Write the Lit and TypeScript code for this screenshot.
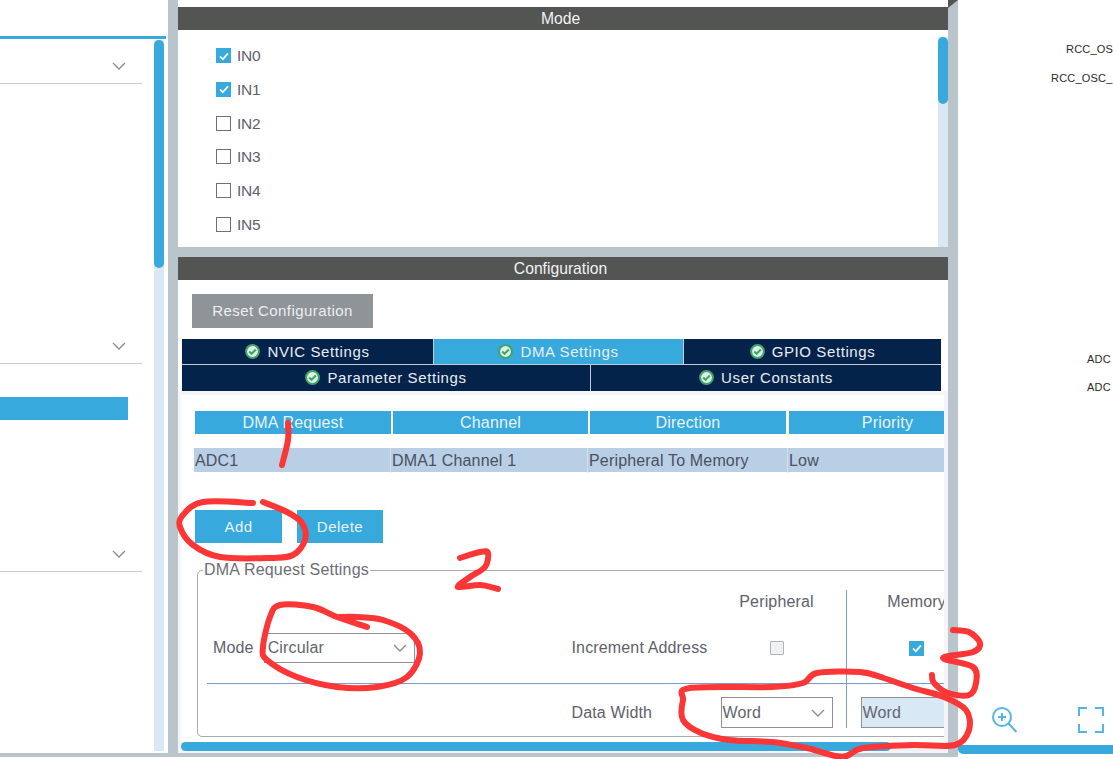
import { LitElement, html, css, svg } from "lit";
import { customElement } from "lit/decorators.js";

type Pt = [number, number];

function smooth(pts: Pt[]): string {
  let d = `M${pts[0][0]} ${pts[0][1]}`;
  for (let i = 0; i < pts.length - 1; i++) {
    const p0 = pts[Math.max(i - 1, 0)];
    const p1 = pts[i];
    const p2 = pts[i + 1];
    const p3 = pts[Math.min(i + 2, pts.length - 1)];
    const c1x = p1[0] + (p2[0] - p0[0]) / 6;
    const c1y = p1[1] + (p2[1] - p0[1]) / 6;
    const c2x = p2[0] - (p3[0] - p1[0]) / 6;
    const c2y = p2[1] - (p3[1] - p1[1]) / 6;
    d += ` C${c1x.toFixed(1)} ${c1y.toFixed(1)} ${c2x.toFixed(1)} ${c2y.toFixed(1)} ${p2[0]} ${p2[1]}`;
  }
  return d;
}

const marks: Pt[][] = [
  [[288, 423], [288, 440], [282, 465]],
  [[253, 503], [203, 502], [183, 515], [180, 527], [193, 545], [220, 557], [270, 558], [293, 555], [305, 540], [302, 523], [287, 512], [263, 502]],
  [[460, 558], [480, 552], [488, 553], [485, 567], [470, 577], [458, 587], [480, 585], [498, 589]],
  [[367, 627], [337, 617], [313, 607], [280, 605], [270, 617], [263, 647], [267, 660], [297, 677], [337, 687], [377, 687], [407, 677], [420, 653], [410, 633], [383, 620], [357, 617], [337, 617]],
  [[953, 630], [969, 632], [980, 643], [973, 652], [943, 658], [973, 667], [976, 683], [969, 695], [948, 693], [934, 683], [932, 675]],
  [[881, 677], [860, 672], [817, 673], [803, 683], [772, 687], [690, 688], [683, 700], [683, 720], [701, 733], [729, 740], [772, 742], [807, 748], [842, 757], [863, 748], [913, 745], [955, 745], [969, 730], [966, 710], [944, 697], [913, 688], [881, 677]],
];

const chevron = html`<svg class="chev" width="14" height="8" viewBox="0 0 14 8"><path d="M1 1l6 6 6-6" fill="none" stroke="#8c8f92" stroke-width="1.4"/></svg>`;
const okIcon = html`<svg class="ok" width="15" height="15" viewBox="0 0 15 15"><circle cx="7.5" cy="7.5" r="7.4" fill="#3fa66a"/><circle cx="7.5" cy="7.5" r="5.4" fill="#dff0e6"/><path d="M4.2 7.4l2.4 2.4 4.2-4.2" fill="none" stroke="#3fa66a" stroke-width="2.1"/></svg>`;
const tick = html`<svg width="14" height="14" viewBox="0 0 14 14"><path d="M3 7.4l2.8 2.8L11 4.4" fill="none" stroke="#fff" stroke-width="1.7"/></svg>`;

@customElement("app-root")
export class AppRoot extends LitElement {
  static styles = css`
    :host {
      display: block;
      position: relative;
      width: 1113px;
      height: 759px;
      overflow: hidden;
      background: #fff;
      font-family: "Liberation Sans", Arial, sans-serif;
      font-size: 16px;
      color: #5e616b;
    }
    .frame { display: grid; grid-template-columns: 168px 10px 770px 10px 155px; grid-template-rows: 757px; }
    .gutter { background: #b9c4cb; position: relative; }
    .corner { position: absolute; top: 0; left: 0; width: 0; height: 0; border-top: 8px solid #535553; border-right: 10px solid transparent; }

    .left { display: flex; flex-direction: column; box-sizing: border-box; padding-top: 36px; height: 757px; border-bottom: 4px solid #b9c4cb; }
    .left-top { height: 3px; background: #38a9dc; margin-right: 2px; flex: none; }
    .left-body { flex: 1; display: flex; padding-top: 1px; min-height: 0; padding-bottom: 2px; }
    .tree { width: 142px; flex: none; }
    .section { height: 21px; padding-top: 2px; border-bottom: 1px solid #c9ced2; display: flex; justify-content: flex-end; align-items: flex-start; padding-right: 16px; }
    .s1 { margin-top: 20px; }
    .s2 { margin-top: 256px; }
    .s3 { margin-top: 128px; }
    .sel { width: 128px; height: 23px; background: #38a9dc; margin-top: 33px; }
    .vbar { width: 10px; margin-left: 12px; background: #d9e8f5; flex: none; }
    .vthumb { background: #38a9dc; border-radius: 5px; }
    .thumb-left { height: 228px; }

    .center { display: flex; flex-direction: column; background: #b9c4cb; padding-bottom: 4px; min-height: 0; }
    .head { height: 23px; background: #535553; color: #f2f2f2; text-align: center; line-height: 24px; font-size: 15.7px; flex: none; padding-right: 5px; }
    .mode-wrap { background: #fff; padding-top: 7px; height: 240px; box-sizing: content-box; display: flex; flex-direction: column; flex: none; }
    .mode-body { flex: 1; display: flex; min-height: 0; padding-top: 7px; }
    .inputs { flex: 1; padding: 11px 0 0 38px; display: flex; flex-direction: column; }
    .in { height: 33.8px; flex: none; display: flex; align-items: flex-start; gap: 6px; line-height: 16px; font-size: 15.5px; letter-spacing: -.2px; }
    .cb { width: 15px; height: 15px; box-sizing: border-box; border: 1.5px solid #707070; background: #fff; flex: none; display: flex; }
    .cb.on { background: #38a9dc; border: 0; align-items: center; justify-content: center; }
    .cb.off { width: 14px; height: 14px; border: 1px solid #b0b3b6; background: #eff0f1; border-radius: 1px; }
    .mode-bar { width: 10px; background: #d9e8f5; flex: none; }
    .mode-bar .vthumb { height: 67px; }

    .config { margin-top: 10px; flex: 1; background: #fff; display: flex; flex-direction: column; min-height: 0; }
    .reset { align-self: flex-start; margin: 14px 0 0 14px; width: 181px; height: 34px; line-height: 34px; text-align: center; background: #8f9499; color: #eceeef; letter-spacing: .42px; font-size: 15px; }
    .tabs { margin: 11px 7px 0 4px; background: #c5cbd0; display: flex; flex-direction: column; gap: 1px; flex: none; }
    .tabrow { display: flex; gap: 1px; }
    .tab { height: 25px; background: #03234b; color: #e9edf2; display: flex; align-items: center; justify-content: center; gap: 7px; letter-spacing: .6px; font-size: 15px; box-sizing: border-box; }
    .tab.active { background: #38a9dc; }
    .tab.tall { height: 26px; padding-bottom: 2px; }
    .t-nvic { width: 251px; }
    .t-dma { width: 249px; }
    .t-param { width: 408px; }
    .t-flex { flex: 1; }
    .content { flex: 1; min-height: 0; display: flex; flex-direction: column; background: #f3f5f7; padding: 4px 0 0 3px; }
    .pane { flex: 1; min-height: 0; overflow: hidden; padding: 16px 0 0 13px; margin-right: 4px; background: #fff; }
    .table { display: grid; grid-template-columns: 196px 195px 196px 198px; column-gap: 2px; margin-left: 1px; width: 795px; }
    .th { height: 23px; line-height: 23px; background: #38a9dc; color: #e6f3fa; text-align: center; font-size: 16px; letter-spacing: .2px; white-space: nowrap; }
    .th.last { margin-left: 1px; }
    .rows { display: grid; grid-template-columns: 197px 197px 200px 170px; margin-top: 14px; height: 24px; background: #b8cfe6; width: 764px; }
    .td { line-height: 25px; padding-left: 1px; font-size: 16px; letter-spacing: .17px; color: #4d505c; border-right: 1px solid #d2dfee; white-space: nowrap; }
    .btns { display: flex; gap: 15px; margin: 38px 0 0 1px; }
    .btn { width: 87px; height: 33px; line-height: 33px; background: #38a9dc; color: #e6f3fa; text-align: center; letter-spacing: .5px; font-size: 15px; }
    .btn.del { width: 86px; }

    fieldset { margin: 19px 0 0 3px; padding: 0; width: 800px; height: 175px; box-sizing: border-box; border: 1.5px solid #a8acaf; border-radius: 5px; min-inline-size: 0; }
    legend { padding: 0 1px; margin-left: 5px; font-size: 16px; line-height: 16px; letter-spacing: .2px; color: #6b6e76; }
    .fs-grid { display: grid; grid-template-columns: 373.5px 149px 112px 13px 1px 14px 112px; grid-template-rows: 47px 46px 12px 1px 13px 31px; }
    .cell { display: flex; align-items: center; font-size: 16px; letter-spacing: .15px; white-space: nowrap; }
    .center-x { justify-content: center; }
    .mode-cell { padding-left: 15px; gap: 10px; }
    .select { box-sizing: border-box; border: 1px solid #8e9194; height: 30px; display: flex; align-items: center; justify-content: space-between; padding: 0 7px 0 3px; color: #62656d; background: #fff; flex: none; font-size: 16px; }
    .select.mode { width: 151px; }
    .select.word { width: 112px; height: 31px; padding-left: 1px; }
    .select.mem { width: 112px; height: 31px; padding-left: 1px; background: #d8e8f5; }
    .hline { grid-column: 1 / -1; grid-row: 4; margin-left: 8.5px; background: #7f9bcb; }
    .vline { grid-column: 5; grid-row: 1 / -1; margin-top: 12px; background: #7f9bcb; }

    .hbar { height: 9px; margin: 0 4px 2px 0; background: #eef1f4; flex: none; }
    .hthumb { width: 710px; height: 9px; background: #38a9dc; border-radius: 5px; }

    .right { position: relative; display: flex; flex-direction: column; justify-content: flex-end; overflow: hidden; }
    .pin { font-size: 11px; letter-spacing: .2px; color: #2b2b2b; white-space: nowrap; line-height: 13px; position: absolute; }
    .tools { display: flex; justify-content: space-between; padding: 0 9px 11px 33px; }
    .rbar { height: 9px; margin-bottom: 3px; background: #38a9dc; border-radius: 0 0 0 5px; flex: none; }
    .ink { position: absolute; inset: 0; width: 1113px; height: 759px; pointer-events: none; }
  `;

  render() {
    const inputs = ["IN0", "IN1", "IN2", "IN3", "IN4", "IN5"];
    const pins = [
      { t: "RCC_OS", x: 108, y: 43 },
      { t: "RCC_OSC_", x: 93, y: 72 },
      { t: "ADC", x: 129, y: 353 },
      { t: "ADC", x: 129, y: 381 },
    ];
    return html`
      <div class="frame">
        <aside class="left">
          <div class="left-top"></div>
          <div class="left-body">
            <div class="tree">
              <div class="section s1">${chevron}</div>
              <div class="section s2">${chevron}</div>
              <div class="sel"></div>
              <div class="section s3">${chevron}</div>
            </div>
            <div class="vbar"><div class="vthumb thumb-left"></div></div>
          </div>
        </aside>
        <div class="gutter"></div>
        <main class="center">
          <section class="mode-wrap">
            <div class="head">Mode</div>
            <div class="mode-body">
              <div class="inputs">
                ${inputs.map(
                  (n, i) => html`<div class="in"><span class="cb ${i < 2 ? "on" : ""}">${i < 2 ? tick : ""}</span>${n}</div>`
                )}
              </div>
              <div class="mode-bar"><div class="vthumb"></div></div>
            </div>
          </section>
          <section class="config">
            <div class="head">Configuration</div>
            <div class="reset">Reset Configuration</div>
            <div class="tabs">
              <div class="tabrow">
                <div class="tab t-nvic">${okIcon}NVIC Settings</div>
                <div class="tab active t-dma">${okIcon}DMA Settings</div>
                <div class="tab t-flex">${okIcon}GPIO Settings</div>
              </div>
              <div class="tabrow">
                <div class="tab tall t-param">${okIcon}Parameter Settings</div>
                <div class="tab tall t-flex">${okIcon}User Constants</div>
              </div>
            </div>
            <div class="content">
              <div class="pane">
                <div class="table">
                  <div class="th">DMA Request</div>
                  <div class="th">Channel</div>
                  <div class="th">Direction</div>
                  <div class="th last">Priority</div>
                </div>
                <div class="rows">
                  <div class="td">ADC1</div>
                  <div class="td">DMA1 Channel 1</div>
                  <div class="td">Peripheral To Memory</div>
                  <div class="td">Low</div>
                </div>
                <div class="btns">
                  <div class="btn">Add</div>
                  <div class="btn del">Delete</div>
                </div>
                <fieldset>
                  <legend>DMA Request Settings</legend>
                  <div class="fs-grid">
                    <div class="cell center-x" style="grid-column:3;grid-row:1">Peripheral</div>
                    <div class="cell center-x" style="grid-column:7;grid-row:1">Memory</div>
                    <div class="cell mode-cell" style="grid-column:1;grid-row:2">Mode<span class="select mode">Circular ${chevron}</span></div>
                    <div class="cell" style="grid-column:2;grid-row:2">Increment Address</div>
                    <div class="cell center-x" style="grid-column:3;grid-row:2"><span class="cb off"></span></div>
                    <div class="cell center-x" style="grid-column:7;grid-row:2"><span class="cb on">${tick}</span></div>
                    <div class="hline"></div>
                    <div class="vline"></div>
                    <div class="cell" style="grid-column:2;grid-row:6">Data Width</div>
                    <div class="cell" style="grid-column:3;grid-row:6"><span class="select word">Word ${chevron}</span></div>
                    <div class="cell" style="grid-column:7;grid-row:6"><span class="select mem">Word</span></div>
                  </div>
                </fieldset>
              </div>
              <div class="hbar"><div class="hthumb"></div></div>
            </div>
          </section>
        </main>
        <div class="gutter"><div class="corner"></div></div>
        <div class="right">
          ${pins.map((p) => html`<span class="pin" style="left:${p.x}px;top:${p.y}px">${p.t}</span>`)}
          <div class="tools">
            <svg width="27" height="27" viewBox="0 0 27 27" fill="none" stroke="#55b5e2" stroke-width="2">
              <circle cx="11" cy="10" r="9"/>
              <path d="M17.5 16.5l8 8.5M7 10h8M11 6v8"/>
            </svg>
            <svg width="26" height="26" viewBox="0 0 26 26" fill="none" stroke="#55b5e2" stroke-width="2">
              <path d="M1 9V1h8M17 1h8v8M25 17v8h-8M9 25H1v-8"/>
            </svg>
          </div>
          <div class="rbar"></div>
        </div>
      </div>
      <svg class="ink" viewBox="0 0 1113 759">
        ${marks.map((m) => svg`<path d=${smooth(m)} fill="none" stroke="#fb3636" stroke-width="6" stroke-linecap="round" stroke-linejoin="round"/>`)}
      </svg>
    `;
  }
}
